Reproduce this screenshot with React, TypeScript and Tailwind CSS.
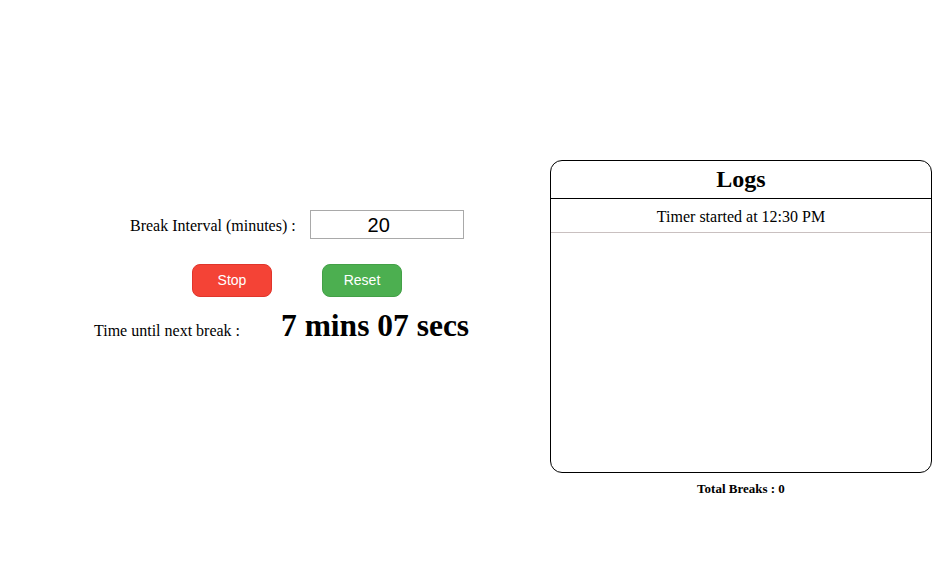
export default function App() {
  return (
    <div className="flex h-[562px] w-[952px] bg-white text-black font-['Liberation_Serif',serif]">
      <div className="w-[550px] pt-[210px]">
        <div className="flex h-[29px] items-center pl-[130px]">
          <span className="pt-[3px] text-[16px]">Break Interval (minutes) :</span>
          <div className="ml-[14px] flex h-[29px] w-[154px] items-center justify-center border border-[#a9a9a9] pr-[16px] font-['Liberation_Sans',sans-serif] text-[20px]">
            20
          </div>
        </div>
        <div className="mt-[25px] flex gap-[50px] pl-[192px]">
          <button className="h-[33px] w-[80px] rounded-[8px] border border-[#e0352b] bg-[#f44336] font-['Liberation_Sans',sans-serif] text-[14px] text-white">
            Stop
          </button>
          <button className="h-[33px] w-[80px] rounded-[8px] border border-[#43a047] bg-[#4caf50] font-['Liberation_Sans',sans-serif] text-[14px] text-white">
            Reset
          </button>
        </div>
        <div className="mt-[5px] flex items-baseline pl-[94px]">
          <span className="w-[187px] text-[16px]">Time until next break :</span>
          <span className="text-[31.5px] font-bold">7 mins 07 secs</span>
        </div>
      </div>
      <div className="w-[382px] pt-[160px]">
        <div className="flex h-[313px] flex-col rounded-[12px] border border-black">
          <div className="flex h-[38px] items-center justify-center border-b border-black pb-[2px] text-[24px] font-bold">
            Logs
          </div>
          <div className="flex h-[34px] items-center justify-center border-b border-[#c9c0c0] pt-[3px] text-[16px]">
            Timer started at 12:30 PM
          </div>
        </div>
        <div className="mt-[6px] text-center text-[13px] font-bold">Total Breaks : 0</div>
      </div>
    </div>
  );
}
